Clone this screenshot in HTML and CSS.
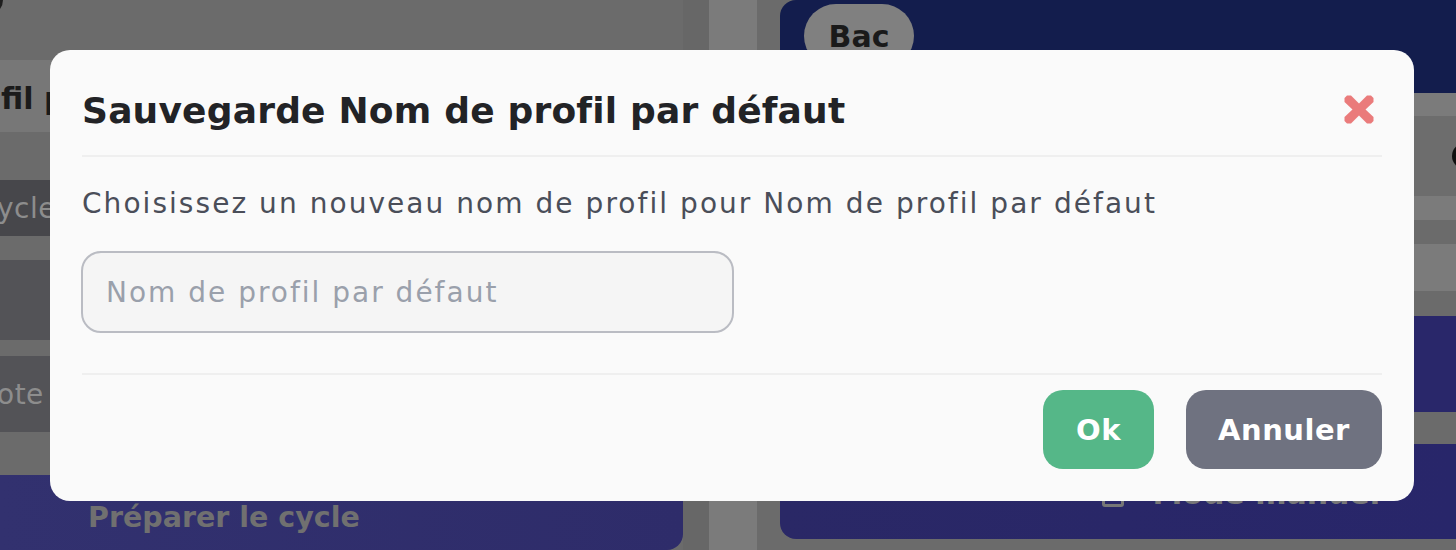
FILE: index.html
```html
<!DOCTYPE html>
<html lang="fr">
<head>
<meta charset="utf-8">
<title>Sauvegarde</title>
<link rel="stylesheet" href="styles.css">
</head>
<body>
<div class="app">
  <div class="left">
    <div class="l-top"><span class="l-dot"></span></div>
    <div class="l-head"><span class="l-clip">fil p</span></div>
    <div class="l-pill"><span class="l-clip">ycle</span></div>
    <div class="l-block"></div>
    <div class="l-block l-block2"><span class="l-clip">ote</span></div>
    <div class="l-btn">Préparer le cycle</div>
  </div>
  <div class="mid-a"></div>
  <div class="mid-b"></div>
  <div class="mid-c"></div>
  <div class="right">
    <div class="r-top"><span class="r-bac">Bac</span></div>
    <div class="r-light r-s1"></div>
    <div class="r-dark r-s2"><span class="r-knob"></span></div>
    <div class="r-light r-s3"></div>
    <div class="r-dark r-s4"></div>
    <div class="r-light r-s5"></div>
    <div class="r-dark r-s4b"></div>
    <div class="r-navy r-s6"></div>
    <div class="r-dark r-s7"></div>
    <div class="r-navy r-s8"><span class="r-mode"><span class="r-box"></span>Mode manuel</span></div>
  </div>
</div>

<div class="modal">
  <div class="modal-head">
    <h2 class="modal-title">Sauvegarde Nom de profil par défaut</h2>
    <button class="modal-close" aria-label="Fermer">
      <svg width="30" height="29" viewBox="0 0 30 29"><polygon fill="#ea7b7b" points="3,0.5 7,0.5 15,8.5 23,0.5 27,0.5 29.5,3 29.5,7 21.5,14.5 29.5,22 29.5,26 27,28.5 23,28.5 15,20.5 7,28.5 3,28.5 0.5,26 0.5,22 8.5,14.5 0.5,7 0.5,3"/></svg>
    </button>
  </div>
  <div class="modal-body">
    <p class="modal-text">Choisissez un nouveau nom de profil pour Nom de profil par défaut</p>
    <input class="modal-input" type="text" placeholder="Nom de profil par défaut">
  </div>
  <div class="modal-foot">
    <button class="btn btn-ok">Ok</button>
    <button class="btn btn-cancel">Annuler</button>
  </div>
</div>
</body>
</html>
```

FILE: styles.css
```css
html, body {
  margin: 0;
  padding: 0;
}
body {
  width: 1456px;
  height: 550px;
  overflow: hidden;
  position: relative;
  font-family: "DejaVu Sans", "Liberation Sans", sans-serif;
}
.app {
  display: flex;
  width: 1456px;
  height: 550px;
  background: #6b6b6b;
  overflow: hidden;
}
.left {
  width: 683px;
  flex: none;
  display: flex;
  flex-direction: column;
}
.l-top {
  height: 60px;
  flex: none;
}
.l-dot {
  display: block;
  width: 30px;
  height: 30px;
  border-radius: 50%;
  background: #1e1e1e;
  margin: -15px 0 0 -27px;
}
.l-clip {
  display: block;
  width: 50px;
  overflow: hidden;
  white-space: nowrap;
}
.l-head {
  height: 72px;
  flex: none;
  background: #777777;
  color: #1b1b1b;
  font-weight: 700;
  font-size: 30px;
  display: flex;
  align-items: center;
  padding-left: 1px;
  padding-top: 4px;
  box-sizing: border-box;
}
.l-pill {
  height: 56px;
  flex: none;
  margin-top: 48px;
  width: 200px;
  background: #47474b;
  border-radius: 0 12px 12px 0;
  color: #8d8d8d;
  font-size: 28px;
  letter-spacing: 0.5px;
  display: flex;
  align-items: center;
  text-indent: -3px;
}
.l-block {
  height: 80px;
  flex: none;
  margin-top: 24px;
  background: #535357;
}
.l-block2 {
  height: 76px;
  margin-top: 16px;
  color: #8d8d8d;
  font-size: 28px;
  letter-spacing: 0.5px;
  display: flex;
  align-items: center;
  text-indent: -3px;
}
.l-btn {
  flex: 1;
  margin-top: 43px;
  background: linear-gradient(90deg, #32316f, #2e2c6a);
  border-radius: 0 0 16px 0;
  color: #707070;
  font-weight: 700;
  font-size: 28.5px;
  padding: 26px 0 0 88px;
  line-height: 34px;
}
.mid-a { width: 26px; flex: none; background: #676767; }
.mid-b { width: 48px; flex: none; background: #7b7b7b; }
.mid-c { width: 23px; flex: none; background: #6b6b6b; }
.right {
  flex: 1;
  display: flex;
  flex-direction: column;
}
.r-top {
  height: 93px;
  flex: none;
  background: #131d4d;
  border-top-left-radius: 16px;
  padding: 4px 0 0 24px;
  box-sizing: border-box;
}
.r-bac {
  display: inline-flex;
  align-items: center;
  justify-content: center;
  width: 110px;
  height: 64px;
  border-radius: 32px;
  background: #808080;
  color: #1a1a1a;
  font-weight: 700;
  font-size: 30px;
}
.r-light { background: #7b7b7b; flex: none; }
.r-dark { background: #6b6b6b; flex: none; }
.r-navy { background: #29276a; flex: none; }
.r-s1 { height: 23px; }
.r-s2 {
  height: 80px;
  background: #6d6d6d;
  display: flex;
  align-items: center;
  justify-content: flex-end;
}
.r-knob {
  width: 26px;
  height: 26px;
  border-radius: 50%;
  background: #111;
  margin-right: -22px;
}
.r-s3 { height: 24px; }
.r-s4 { height: 24px; }
.r-s5 { height: 47px; }
.r-s4b { height: 25px; }
.r-s6 { height: 96px; }
.r-s7 { height: 32px; }
.r-s8 {
  height: 95px;
  border-bottom-left-radius: 16px;
  display: flex;
  justify-content: flex-end;
  align-items: flex-start;
  padding: 35px 76px 0 0;
  box-sizing: border-box;
  background: linear-gradient(90deg, #2a2866, #28266a);
}
.r-mode {
  display: flex;
  align-items: center;
  gap: 28px;
  color: #777;
  font-weight: 700;
  font-size: 30px;
  line-height: 30px;
}
.r-box {
  width: 16px;
  height: 20px;
  border: 3px solid #777;
  border-radius: 3px;
}

/* Modal */
.modal {
  position: absolute;
  left: 50px;
  top: 50px;
  width: 1364px;
  height: 451px;
  background: #fafafa;
  border-radius: 20px;
  display: flex;
  flex-direction: column;
  box-sizing: border-box;
}
.modal-head {
  margin: 0 32px;
  padding: 40px 8px 23px 0;
  border-bottom: 2px solid #efefef;
  display: flex;
  align-items: center;
  justify-content: space-between;
}
.modal-title {
  margin: 0;
  font-size: 36px;
  line-height: 42px;
  font-weight: 700;
  color: #222326;
  letter-spacing: 0.2px;
}
.modal-close {
  border: 0;
  background: none;
  padding: 0;
  width: 30px;
  height: 29px;
  display: flex;
  margin-top: -4px;
}
.modal-body {
  margin: 0 32px;
  padding: 30px 0 40px;
  border-bottom: 2px solid #efefef;
  display: flex;
  flex-direction: column;
  gap: 30px;
}
.modal-text {
  margin: 0;
  font-size: 28px;
  line-height: 34px;
  letter-spacing: 2.05px;
  color: #4a4e59;
}
.modal-input {
  width: 653px;
  height: 82px;
  box-sizing: border-box;
  border: 2px solid #babcc3;
  border-radius: 20px;
  background: #f5f5f5;
  padding: 0 23px;
  font-family: inherit;
  font-size: 28px;
  letter-spacing: 2px;
  color: #333;
  margin-left: -1px;
  outline: none;
}
.modal-input::placeholder {
  color: #9aa0ab;
}
.modal-foot {
  margin: 0 32px;
  padding-top: 15px;
  display: flex;
  justify-content: flex-end;
  gap: 32px;
}
.btn {
  height: 79px;
  border: 0;
  border-radius: 20px;
  color: #ffffff;
  font-family: inherit;
  font-weight: 700;
  font-size: 29px;
  letter-spacing: 0.5px;
  padding: 0;
}
.btn-ok {
  width: 111px;
  background: #55b788;
}
.btn-cancel {
  width: 196px;
  background: #6f7280;
}
```
